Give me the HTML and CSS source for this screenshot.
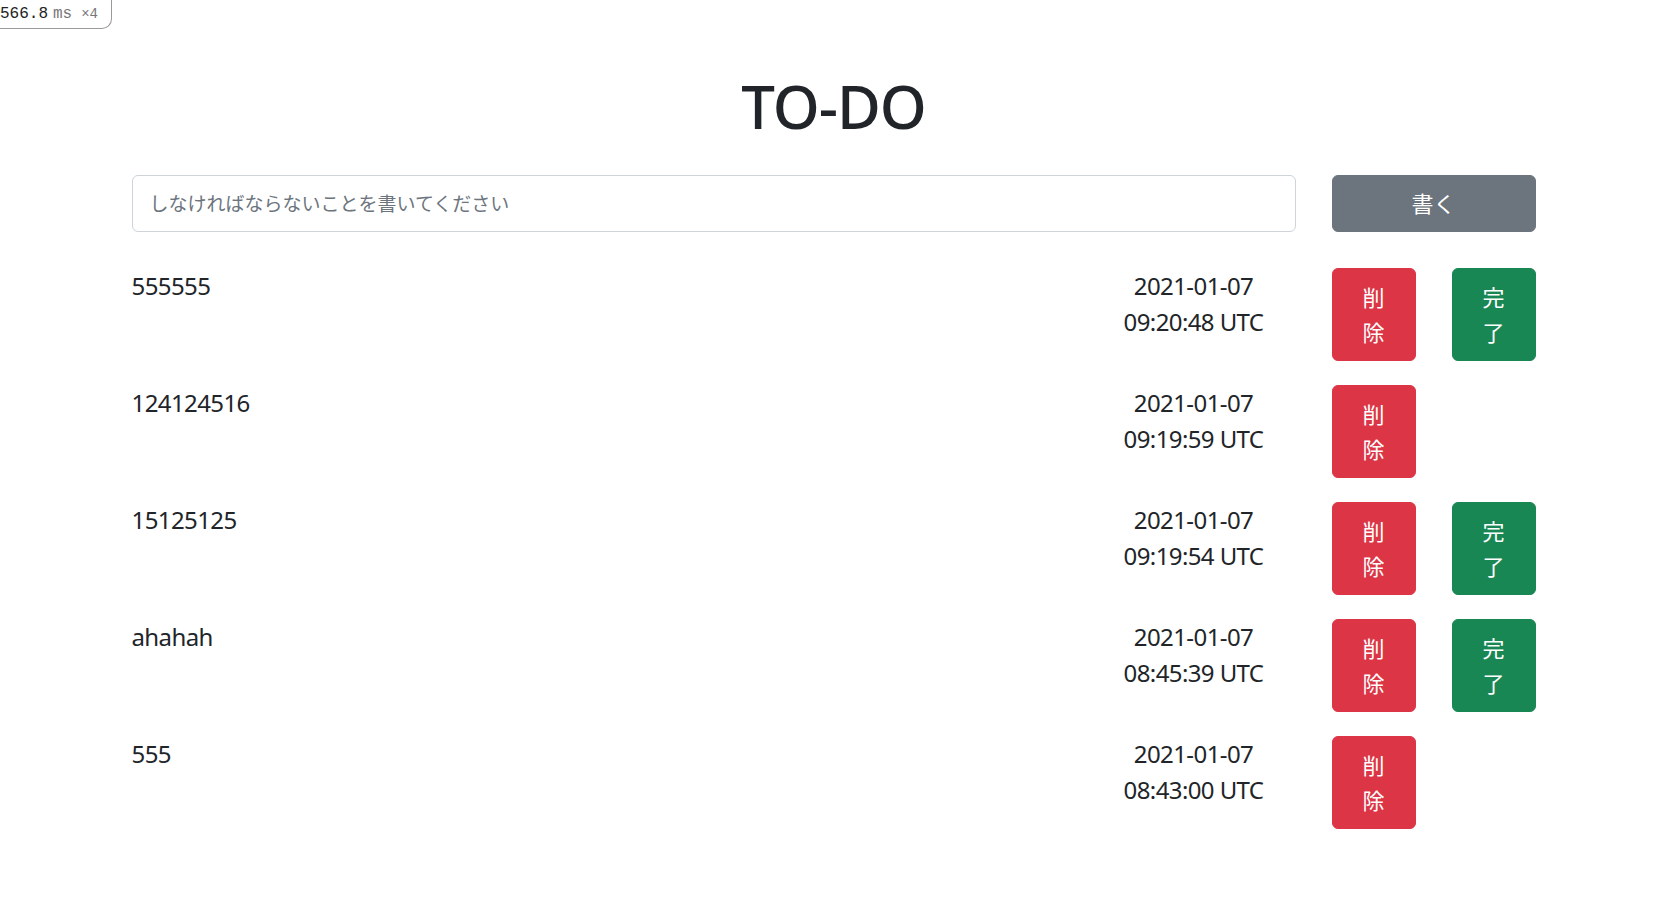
FILE: index.html
```html
<!DOCTYPE html>
<html lang="ja">
<head>
<meta charset="utf-8">
<title>TO-DO</title>
<link rel="stylesheet" href="styles.css">
</head>
<body>
<div class="perf-badge"><span class="perf-num">566.8</span><span class="perf-unit">ms</span><span class="perf-count">×4</span></div>
<main class="container">
  <h1 class="title">TO-DO</h1>
  <form class="add-form">
    <input class="form-input" type="text" placeholder="しなければならないことを書いてください">
    <button class="btn btn-secondary" type="button">書く</button>
  </form>
  <ul class="todo-list">
    <li class="todo-row">
      <span class="todo-text">555555</span>
      <span class="todo-date">2021-01-07<br>09:20:48 UTC</span>
      <button class="btn btn-danger btn-tall" type="button">削除</button>
      <button class="btn btn-success btn-tall" type="button">完了</button>
    </li>
    <li class="todo-row">
      <span class="todo-text">124124516</span>
      <span class="todo-date">2021-01-07<br>09:19:59 UTC</span>
      <button class="btn btn-danger btn-tall" type="button">削除</button>
    </li>
    <li class="todo-row">
      <span class="todo-text">15125125</span>
      <span class="todo-date">2021-01-07<br>09:19:54 UTC</span>
      <button class="btn btn-danger btn-tall" type="button">削除</button>
      <button class="btn btn-success btn-tall" type="button">完了</button>
    </li>
    <li class="todo-row">
      <span class="todo-text">ahahah</span>
      <span class="todo-date">2021-01-07<br>08:45:39 UTC</span>
      <button class="btn btn-danger btn-tall" type="button">削除</button>
      <button class="btn btn-success btn-tall" type="button">完了</button>
    </li>
    <li class="todo-row">
      <span class="todo-text">555</span>
      <span class="todo-date">2021-01-07<br>08:43:00 UTC</span>
      <button class="btn btn-danger btn-tall" type="button">削除</button>
    </li>
  </ul>
</main>
</body>
</html>
```

FILE: styles.css
```css
* { box-sizing: border-box; }

html, body {
  margin: 0;
  padding: 0;
  background: #fff;
}

body {
  font-family: "Noto Sans", "Noto Sans CJK JP", sans-serif;
  color: #212529;
  font-size: 24px;
  line-height: 1.5;
}

.perf-badge {
  position: absolute;
  top: 0;
  left: 0;
  height: 29px;
  width: 112px;
  display: flex;
  align-items: center;
  gap: 5px;
  background: #fff;
  border-right: 1px solid #9a9a9a;
  border-bottom: 1px solid #9a9a9a;
  border-bottom-right-radius: 10px;
  font-family: "Liberation Mono", "DejaVu Sans Mono", monospace;
  line-height: 1;
}

.perf-num { font-size: 16px; color: #222; }
.perf-unit { font-size: 16px; color: #777; }
.perf-count { font-size: 14px; color: #777; margin-left: 4px; }

.container {
  max-width: 1404px;
  margin: 0 auto;
  padding-top: 70px;
}

.title {
  margin: 0 0 33px;
  text-align: center;
  font-size: 60px;
  font-weight: 500;
  line-height: 1.2;
  letter-spacing: -1px;
}

.add-form {
  display: grid;
  grid-template-columns: 1fr 204px;
  column-gap: 36px;
  margin: 0 0 36px;
}

.form-input {
  height: 57px;
  padding: 0 17px;
  border: 1px solid #ced4da;
  border-radius: 6px;
  font-family: "Noto Sans", "Noto Sans CJK JP", sans-serif;
  font-size: 19px;
  color: #212529;
  outline: none;
}

.form-input::placeholder { color: #6c757d; }

.btn {
  border: 1px solid transparent;
  border-radius: 6px;
  color: #fff;
  font-family: "Noto Sans", "Noto Sans CJK JP", sans-serif;
  font-size: 22px;
  line-height: 1.5;
  cursor: pointer;
}

.btn-secondary {
  height: 57px;
  background: #6c757d;
  border-color: #6c757d;
}

.btn-danger { background: #dc3545; border-color: #dc3545; }
.btn-success { background: #198754; border-color: #198754; }

.btn-tall {
  width: 84px;
  height: 93px;
  padding: 0 20px;
  line-height: 35px;
  font-size: 22px;
}

.todo-list {
  list-style: none;
  margin: 0;
  padding: 0;
}

.todo-row {
  display: grid;
  grid-template-columns: 1fr 204px 84px 84px;
  column-gap: 36px;
  align-items: start;
  margin-bottom: 24px;
  letter-spacing: -0.6px;
}

.todo-text {
  line-height: 36px;
}

.todo-date {
  text-align: center;
  line-height: 36px;
}

.todo-row .btn { letter-spacing: 0; }
```
